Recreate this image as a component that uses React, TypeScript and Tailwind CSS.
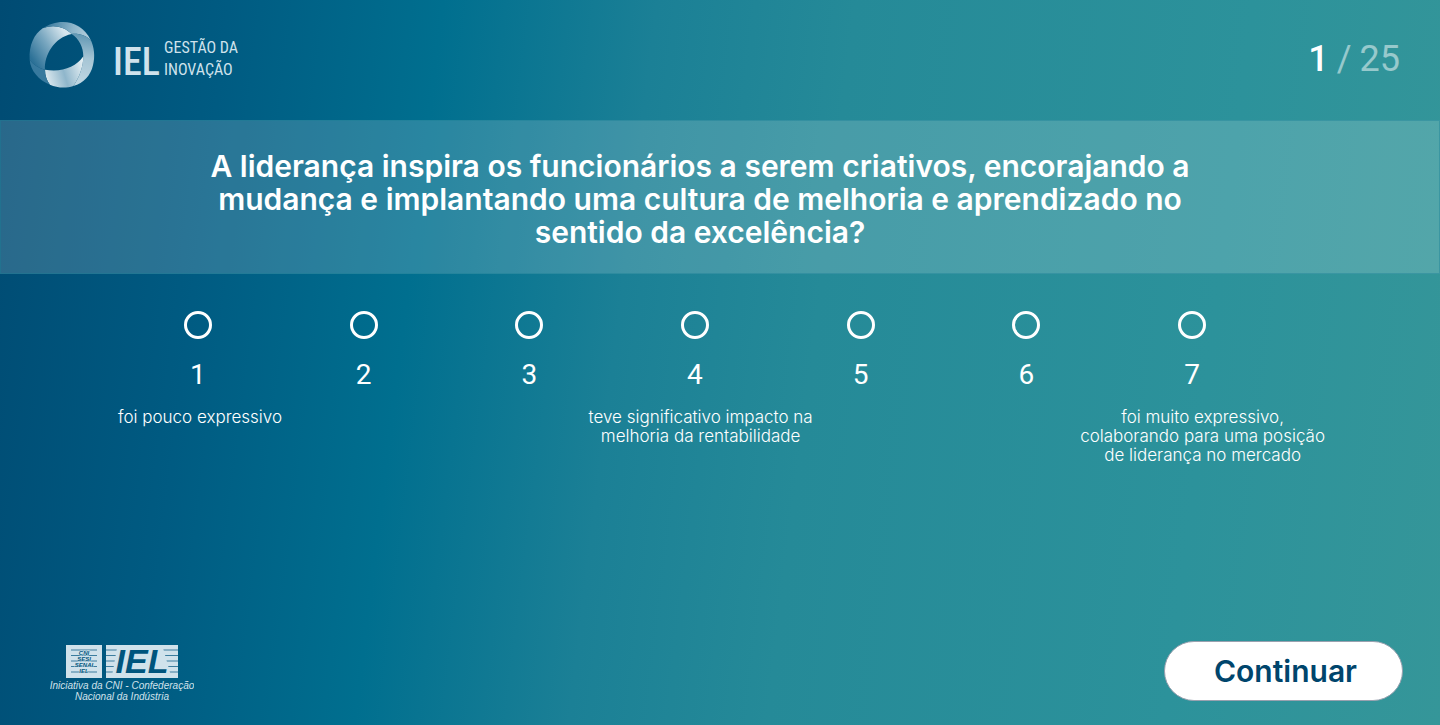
import React from "react";

const options = [1, 2, 3, 4, 5, 6, 7];

function GestaoLogo() {
  return (
    <svg viewBox="0 0 212 68" className="h-[68px] w-[212px]" role="img" aria-label="IEL Gestão da Inovação">
      <defs>
        <linearGradient id="ringLeft" gradientUnits="userSpaceOnUse" x1="15" y1="120" x2="120" y2="50">
          <stop offset="0" stopColor="#2c7197" />
          <stop offset="0.5" stopColor="#79a7c0" />
          <stop offset="1" stopColor="#d6e5ed" />
        </linearGradient>
        <linearGradient id="ringTop" gradientUnits="userSpaceOnUse" x1="50" y1="25" x2="195" y2="60">
          <stop offset="0" stopColor="#2c7197" />
          <stop offset="0.6" stopColor="#8db5ca" />
          <stop offset="1" stopColor="#b9d2df" />
        </linearGradient>
        <linearGradient id="ringRight" gradientUnits="userSpaceOnUse" x1="175" y1="50" x2="160" y2="190">
          <stop offset="0" stopColor="#6298b4" />
          <stop offset="0.5" stopColor="#a6c5d5" />
          <stop offset="1" stopColor="#bdd5e1" />
        </linearGradient>
        <linearGradient id="ringBottom" gradientUnits="userSpaceOnUse" x1="55" y1="180" x2="172" y2="145">
          <stop offset="0" stopColor="#e2edf2" />
          <stop offset="0.5" stopColor="#8fb6cb" />
          <stop offset="1" stopColor="#e2edf2" />
        </linearGradient>
      </defs>
      <g transform="translate(-2 -3) scale(0.3333)">
        <path d="M50 31C25 48 8 82 11 125C22 140 38 150 57 155C54 112 85 58 137 48C115 25 80 18 50 31Z" fill="url(#ringLeft)" />
        <path d="M50 31C95 0 165 3 195 68C180 52 160 46 137 48C115 25 80 18 50 31Z" fill="url(#ringTop)" />
        <path d="M128 14C190 25 215 90 201 142C194 172 174 196 142 204C160 180 172 145 172 115C172 88 160 63 137 48C160 46 180 52 195 68C183 38 158 20 128 14Z" fill="url(#ringRight)" />
        <path d="M57 155C105 164 150 148 172 115C172 145 160 180 142 204C118 212 92 209 72 200C62 188 57 172 57 155Z" fill="url(#ringBottom)" />
        <path d="M11 125C22 140 38 150 57 155C57 172 62 188 72 200C38 187 13 157 11 125Z" fill="#37799e" />
      </g>
      <g fill="#cfe2ec" fontFamily="'Roboto Condensed', 'Liberation Sans Narrow', 'Liberation Sans', sans-serif">
        <text x="85" y="54" fontSize="38" fontWeight="500">IEL</text>
        <text x="136" y="32" fontSize="16">GESTÃO DA</text>
        <text x="136" y="54" fontSize="16">INOVAÇÃO</text>
      </g>
    </svg>
  );
}

function CniLogo() {
  return (
    <svg viewBox="0 0 144 60" className="h-[60px] w-[144px]" role="img" aria-label="Iniciativa da CNI - Confederação Nacional da Indústria">
      <path d="M16 4h36v33H16zM56 4h72v33H56z" fill="#d0e2eb" />
      <path d="M21 9h26M21 14.500h26M21 20h26M21 25.500h26M21 31h26M56 9h72M56 14.500h72M56 20h72M56 25.500h72M56 31h72" stroke="#3c7d9e" strokeWidth="1" />
      <path d="M67 7h46l8 28H62z" fill="#d0e2eb" />
      <g fontFamily="'Liberation Sans', sans-serif" fontStyle="italic" textAnchor="middle">
        <g fill="#00557d" fontWeight="700" fontSize="6" stroke="#d0e2eb" strokeWidth="1" paintOrder="stroke">
          <text x="34" y="14">CNI</text>
          <text x="34" y="20">SESI</text>
          <text x="34" y="26">SENAI</text>
          <text x="34" y="32">IEL</text>
        </g>
        <text x="92" y="32" fontSize="34" fontWeight="700" fill="#00557d">IEL</text>
        <g fill="#d0e2eb" fontSize="10">
          <text x="72" y="48">Iniciativa da CNI - Confederação</text>
          <text x="72" y="59">Nacional da Indústria</text>
        </g>
      </g>
    </svg>
  );
}

export default function App() {
  return (
    <main className="flex min-h-screen flex-col bg-[linear-gradient(97deg,#004b73_0%,#005b82_15%,#006f8f_29%,#1b8096_43%,#258a98_56%,#2c929b_82%,#359699_100%)] font-['Inter',sans-serif] text-white">
      <header className="flex h-[120px] items-start justify-between pt-[21px] pr-10 pl-7">
        <GestaoLogo />
        <p className="flex gap-2 pt-[18px] font-['Roboto',sans-serif] text-4xl text-white/50">
          <span className="font-medium text-white">1</span>
          <span>/</span>
          <span>25</span>
        </p>
      </header>

      <section className="border border-[#1a7f95]/40 bg-white/16 px-10 pt-[29px] pb-6">
        <h1 id="question" className="mx-auto max-w-[1080px] pr-10 text-center text-[30px] leading-[33px] font-semibold">
          A liderança inspira os funcionários a serem criativos, encorajando a
          <br />
          mudança e implantando uma cultura de melhoria e aprendizado no
          <br />
          sentido da excelência?
        </h1>
      </section>

      <fieldset aria-labelledby="question" className="px-[115px] pt-[37px]">
        <div className="grid grid-cols-7 pr-[50px]">
          {options.map((n) => (
            <label key={n} className="flex flex-col items-center gap-5 font-['Roboto',sans-serif] text-[28px] leading-8">
              <input type="radio" name="answer" value={n} className="size-7 appearance-none rounded-full border-3 border-white checked:bg-white" />
              {n}
            </label>
          ))}
        </div>
        <div className="grid grid-cols-[170px_1fr_auto] pt-[17px] text-center text-[17px] leading-[19px] font-light">
          <p>foi pouco expressivo</p>
          <p className="pl-9">
            teve significativo impacto na
            <br />
            melhoria da rentabilidade
          </p>
          <p>
            foi muito expressivo,
            <br />
            colaborando para uma posição
            <br />
            de liderança no mercado
          </p>
        </div>
      </fieldset>

      <footer className="mt-auto flex items-end justify-between pr-[37px] pb-6 pl-[50px]">
        <CniLogo />
        <button type="button" className="h-[60px] w-[239px] rounded-full border border-gray-400 bg-white pl-1 text-[30px] font-semibold text-[#00456c]">
          Continuar
        </button>
      </footer>
    </main>
  );
}
